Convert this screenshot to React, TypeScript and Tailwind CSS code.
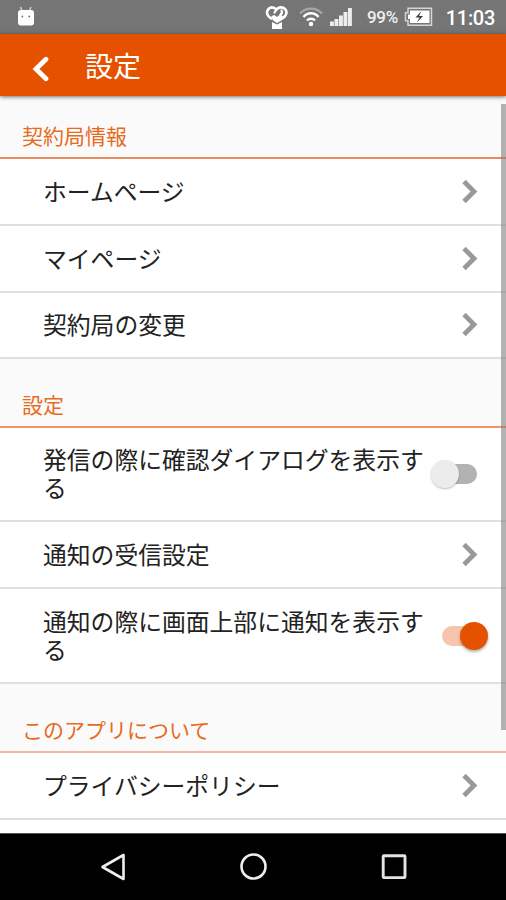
import React, { useState } from 'react';

interface SettingItem {
  readonly label: string;
  readonly heightClass: string;
  readonly toggle?: 'dialog' | 'notice';
}

interface SettingSection {
  readonly title: string;
  readonly headerClass: string;
  readonly items: SettingItem[];
}

const sections: SettingSection[] = [
  {
    title: '契約局情報',
    headerClass: 'h-[63px] border-[#ec8a62]',
    items: [
      { label: 'ホームページ', heightClass: 'h-[67px]' },
      { label: 'マイページ', heightClass: 'h-[67px]' },
      { label: '契約局の変更', heightClass: 'h-[66px]' },
    ],
  },
  {
    title: '設定',
    headerClass: 'h-[69px] border-[#f09468]',
    items: [
      { label: '発信の際に確認ダイアログを表示する', heightClass: 'h-[94px]', toggle: 'dialog' },
      { label: '通知の受信設定', heightClass: 'h-[67px]' },
      { label: '通知の際に画面上部に通知を表示する', heightClass: 'h-[95px]', toggle: 'notice' },
    ],
  },
  {
    title: 'このアプリについて',
    headerClass: 'h-[69px] border-[#f3b8a4]',
    items: [{ label: 'プライバシーポリシー', heightClass: 'h-[67px]' }],
  },
];

function StatusBar() {
  return (
    <div className="flex h-[34px] shrink-0 items-center bg-[#757575] pr-[11px] pl-[17px] text-white">
      <svg width="18" height="20" viewBox="0 0 18 20" className="-mt-[3px]">
        <path d="M3.500 1l1.700 4M14 1l-1.700 4" stroke="#d8d8d8" strokeWidth="1.3" />
        <rect x="1" y="4" width="16" height="15.500" rx="3" fill="#fff" />
        <circle cx="5.300" cy="10.500" r="0.900" fill="#757575" />
        <circle cx="12.300" cy="10.500" r="0.900" fill="#757575" />
      </svg>
      <svg width="24" height="25" viewBox="0 0 24 25" className="ml-[230px]">
        <path
          d="M6.500 13.500C1.500 11 1 6.500 3.500 4C6 1.500 9 2.200 11.500 4.500C13.500 2 17.500 1.500 20 4C22.500 6.500 22 10.500 17.500 13.500"
          fill="none"
          stroke="#fff"
          strokeWidth="2.600"
          strokeLinecap="round"
        />
        <path d="M11.500 4.500L9.500 7.500M16.500 5.500C17.500 7 17 8.500 15.500 9.500" fill="none" stroke="#fff" strokeWidth="2.200" strokeLinecap="round" />
        <path d="M6.500 11l3-1 2.500 2 3-2.500 3 1.500-1.500 4.500L12 18l-4-2.500z" fill="#fff" />
        <path d="M7 17l5 2.500 5-2.500v7H7z" fill="#fff" />
      </svg>
      <svg width="24" height="20" viewBox="0 0 24 20" className="ml-[10px]">
        <path d="M1 6.500C7 -.1 17 -.1 23 6.500" fill="none" stroke="#a6a6a6" strokeWidth="2.200" />
        <path d="M4.500 10C8.700 5 15.300 5 19.500 10" fill="none" stroke="#fff" strokeWidth="2.500" />
        <path d="M8 13.500C10.300 11 13.700 11 16 13.500" fill="none" stroke="#fff" strokeWidth="2.500" />
        <circle cx="12" cy="17" r="2.200" fill="#fff" />
      </svg>
      <svg width="22" height="18" viewBox="0 0 22 18" className="ml-[7px]">
        <path d="M0 13.500h3.900V18H0zM4.500 11h3.900v7H4.500zM9 7.500h3.900V18H9zM13.500 4h3.900v14h-3.900zM18 0h3.900v18H18z" fill="#ededed" />
      </svg>
      <span className="ml-[15px] w-[32px] pt-px font-[Roboto,sans-serif] text-[17px] leading-none font-medium tracking-[-0.300px] whitespace-nowrap text-[#f0f0f0]">
        99%
      </span>
      <svg width="29" height="20" viewBox="0 0 29 20" className="ml-[5px]">
        <path d="M4 1.200h23.500v17H4v-4.500H1.500v-8H4z" fill="none" stroke="#d5d5d5" strokeWidth="1.500" />
        <path d="M6 3.500h19.500V16H6v-4H4V7.500h2z" fill="#fff" />
        <path d="M17.500 4l-6 6.500h4L13 15.500l6-6.500h-4z" fill="#3c3c3c" />
      </svg>
      <span className="ml-auto pt-[2px] font-[Roboto,sans-serif] text-[20px] leading-none font-medium tracking-[-0.300px]">11:03</span>
    </div>
  );
}

function Toggle({ on, onChange }: { readonly on: boolean; readonly onChange: () => void }) {
  return (
    <button
      type="button"
      role="switch"
      aria-checked={on}
      onClick={onChange}
      className={`flex h-[29px] shrink-0 items-center ${on ? 'mr-[18px]' : 'mr-[29px]'}`}
    >
      {on ? (
        <>
          <span className="h-[20px] w-[32px] rounded-l-full bg-[#f7c5ae]" />
          <span className="-ml-[14px] size-[28px] rounded-full bg-[#e65100] shadow-[0_2px_3px_rgba(0,0,0,0.3)]" />
        </>
      ) : (
        <>
          <span className="z-10 size-[28px] rounded-full bg-[#ececec] shadow-[0_1px_2px_rgba(0,0,0,0.25)]" />
          <span className="-ml-[14px] h-[20px] w-[32px] rounded-r-full bg-[#b2b2b2]" />
        </>
      )}
    </button>
  );
}

function Chevron() {
  return (
    <svg width="16" height="24" viewBox="0 0 16 24" className="mr-[28px] shrink-0">
      <path d="M2 1.500L12 11.500L2 21.500" fill="none" stroke="#999" strokeWidth="4.800" />
    </svg>
  );
}

function NavigationBar() {
  return (
    <div className="flex h-[67px] shrink-0 items-center justify-between border-t border-[#555] bg-black pr-[98px] pl-[100px]">
      <svg width="26" height="28" viewBox="0 0 26 28">
        <path d="M2.500 14L23.500 2V26z" fill="none" stroke="#eee" strokeWidth="2.600" strokeLinejoin="round" />
      </svg>
      <svg width="28" height="28" viewBox="0 0 28 28">
        <circle cx="14.500" cy="13.500" r="12" fill="none" stroke="#eee" strokeWidth="2.600" />
      </svg>
      <svg width="28" height="28" viewBox="0 0 28 28">
        <rect x="3.200" y="2.800" width="21.800" height="21.800" rx="0.800" fill="none" stroke="#e4e4e4" strokeWidth="2.900" />
      </svg>
    </div>
  );
}

export default function App() {
  const [toggles, setToggles] = useState({ dialog: false, notice: true });

  const handleToggle = (key: 'dialog' | 'notice') => {
    setToggles((prev) => ({ ...prev, [key]: !prev[key] }));
  };

  return (
    <div className="flex h-[900px] w-[506px] flex-col overflow-hidden bg-white font-['Noto_Sans_CJK_JP',sans-serif]" lang="ja">
      <StatusBar />
      <header className="z-10 flex h-[62px] shrink-0 items-center bg-[#e65100] pl-[32px] text-white shadow-[0_1px_4px_rgba(0,0,0,0.55)]">
        <svg width="18" height="26" viewBox="0 0 18 26" className="mt-[8px]">
          <path d="M14 3.300L4 13l10 9.700" fill="none" stroke="#fff" strokeWidth="4.800" strokeLinecap="round" />
        </svg>
        <h1 className="ml-[35px] text-[28px] leading-[40px] font-normal">設定</h1>
      </header>

      <main className="relative min-h-0 flex-1 overflow-hidden">
        {sections.map((section) => (
          <section key={section.title}>
            <h2 className={`flex items-end border-b-2 bg-[#fafafa] pb-[10px] pl-[22px] text-[21px] leading-[24px] text-[#e86a1c] ${section.headerClass}`}>
              {section.title}
            </h2>
            {section.items.map((item) => (
              <div key={item.label} className={`flex items-center border-b-2 border-[#e0e0e0] pl-[43px] ${item.heightClass}`}>
                <p className="w-[388px] shrink-0 pb-[2px] text-[23.8px] leading-[28px] text-[#222]">{item.label}</p>
                <div className="ml-auto flex">
                  {item.toggle ? (
                    <Toggle on={toggles[item.toggle]} onChange={() => handleToggle(item.toggle!)} />
                  ) : (
                    <Chevron />
                  )}
                </div>
              </div>
            ))}
          </section>
        ))}
        {/* Scroll indicator */}
        <div className="absolute top-[8px] right-0 h-[626px] w-[5px] bg-[#808080]/60" />
      </main>

      <NavigationBar />
    </div>
  );
}
